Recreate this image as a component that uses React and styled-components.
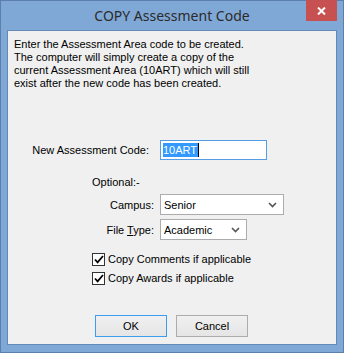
import React from "react"
import styled, { createGlobalStyle } from "styled-components"

const GlobalStyle = createGlobalStyle`
  html, body {
    margin: 0;
    padding: 0;
    background: #7fa7d5;
  }
`

const Frame = styled.div`
  width: 344px;
  height: 353px;
  box-sizing: border-box;
  background: #80a8d6;
  border: 1px solid #5c7fab;
  display: flex;
  flex-direction: column;
  padding: 0 6px 7px 6px;
`

const TitleBar = styled.div`
  position: relative;
  height: 28px;
  display: flex;
  align-items: center;
  justify-content: center;
  font-family: "Noto Sans", "Open Sans", sans-serif;
  font-size: 14px;
  color: #2b2b2b;
  padding-bottom: 1px;
`

const CloseButton = styled.div`
  position: absolute;
  top: -1px;
  right: 0;
  width: 31px;
  height: 21px;
  background: #c75050;
  display: flex;
  align-items: center;
  justify-content: center;
`

const Client = styled.div`
  flex: 1;
  background: #f0f0f0;
  border: 1px solid #6489b8;
  display: flex;
  flex-direction: column;
  font-family: "Liberation Sans", Arial, sans-serif;
  font-size: 11px;
  color: #000;
`

const Intro = styled.p`
  margin: 0;
  padding: 7px 6px 0 6px;
  line-height: 13px;
`

const FieldRow = styled.div`
  display: flex;
  align-items: center;
  margin-top: ${p => p.$top}px;
`

const Label = styled.span`
  width: ${p => p.$width}px;
  text-align: right;
  padding-right: ${p => p.$gap}px;
  box-sizing: content-box;
  flex: none;
`

const TextInput = styled.div`
  width: 107px;
  height: 20px;
  box-sizing: border-box;
  border: 1px solid #569de5;
  background: #fff;
  display: flex;
  align-items: center;
  padding-left: 2px;
`

const Selected = styled.span`
  background: #3399ff;
  color: #fff;
  line-height: 14px;
  padding-right: 1px;
  border-right: 1px solid #000;
`

const Select = styled.div`
  width: ${p => p.$width}px;
  height: 21px;
  box-sizing: border-box;
  border: 1px solid #acacac;
  background: #fff;
  display: flex;
  align-items: center;
  justify-content: space-between;
  padding: 0 6px 0 3px;
`

const Note = styled.div`
  margin: ${p => p.$top}px 0 0 84px;
  line-height: 13px;
`

const CheckRow = styled.label`
  display: flex;
  align-items: center;
  gap: 3px;
  margin: ${p => p.$top}px 0 0 84px;
  line-height: 13px;
`

const Box = styled.span`
  width: 13px;
  height: 13px;
  box-sizing: border-box;
  border: 1px solid #333;
  background: #fff;
  display: flex;
  align-items: center;
  justify-content: center;
`

const ButtonBar = styled.div`
  display: flex;
  gap: 9px;
  margin: auto 0 7px 87px;
`

const Button = styled.div`
  width: 72px;
  height: 22px;
  box-sizing: border-box;
  border: 1px solid ${p => (p.$default ? "#3c9cf0" : "#acacac")};
  background: linear-gradient(#f0f0f0, #e5e5e5);
  display: flex;
  align-items: center;
  justify-content: center;
`

const Chevron = () => (
  <svg width="9" height="6" viewBox="0 0 9 6">
    <path d="M1 1l3.5 3.5L8 1" fill="none" stroke="#555" strokeWidth="1.6" />
  </svg>
)

const Check = () => (
  <svg width="10" height="9" viewBox="0 0 10 9">
    <path d="M1 4.5l2.6 2.8L9 1" fill="none" stroke="#000" strokeWidth="1.8" />
  </svg>
)

const App = () => {
  return (
    <>
      <GlobalStyle />
      <Frame>
        <TitleBar>
          COPY Assessment Code
          <CloseButton>
            <svg width="9" height="8" viewBox="0 0 9 8">
              <path d="M1 0.5l7 7M8 0.5l-7 7" stroke="#fff" strokeWidth="2" />
            </svg>
          </CloseButton>
        </TitleBar>
        <Client>
          <Intro>
            Enter the Assessment Area code to be created.
            <br />
            The computer will simply create a copy of the
            <br />
            current Assessment Area (10ART) which will still
            <br />
            exist after the new code has been created.
          </Intro>
          <FieldRow $top={50}>
            <Label $width={141} $gap={11}>New Assessment Code:</Label>
            <TextInput>
              <Selected>10ART</Selected>
            </TextInput>
          </FieldRow>
          <Note $top={16}>Optional:-</Note>
          <FieldRow $top={5}>
            <Label $width={146} $gap={6}>Campus:</Label>
            <Select $width={124}>
              Senior
              <Chevron />
            </Select>
          </FieldRow>
          <FieldRow $top={4}>
            <Label $width={146} $gap={6}>
              File <u>T</u>ype:
            </Label>
            <Select $width={87}>
              Academic
              <Chevron />
            </Select>
          </FieldRow>
          <CheckRow $top={13}>
            <Box>
              <Check />
            </Box>
            Copy Comments if applicable
          </CheckRow>
          <CheckRow $top={6}>
            <Box>
              <Check />
            </Box>
            Copy Awards if applicable
          </CheckRow>
          <ButtonBar>
            <Button $default>OK</Button>
            <Button>Cancel</Button>
          </ButtonBar>
        </Client>
      </Frame>
    </>
  )
}

export default App
